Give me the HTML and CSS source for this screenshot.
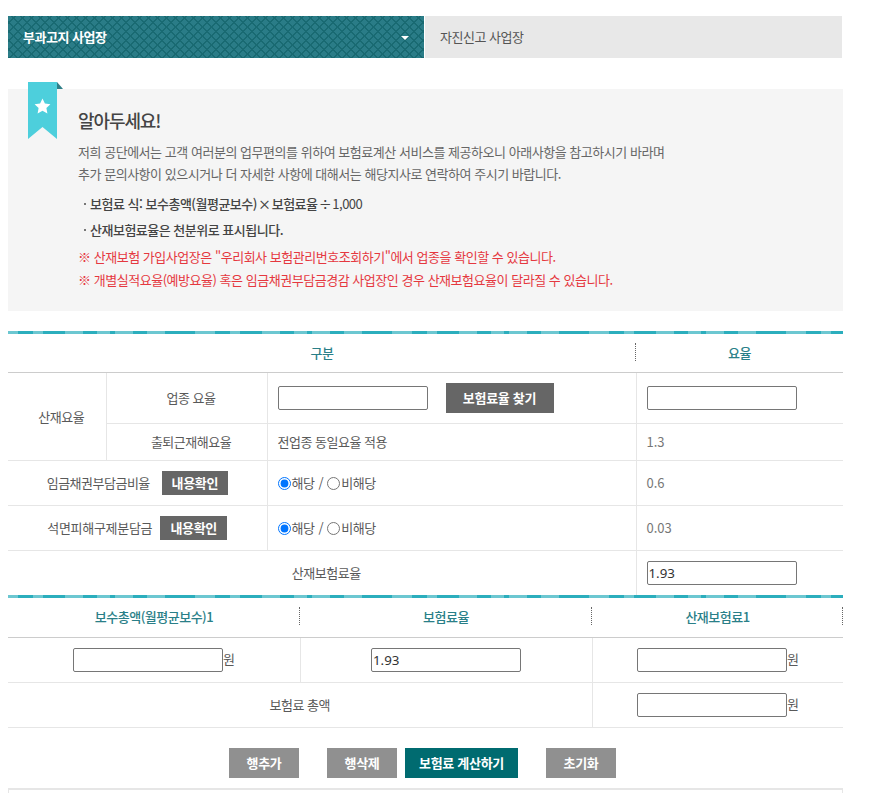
FILE: index.html
```html
<!DOCTYPE html>
<html lang="ko">
<head>
<meta charset="utf-8">
<title>보험료 계산</title>
<link rel="stylesheet" href="styles.css">
</head>
<body>
<div class="tabs">
  <a class="tab tab-on"><span>부과고지 사업장</span><i class="caret"></i></a>
  <a class="tab tab-off">자진신고 사업장</a>
</div>

<section class="notice">
  <div class="ribbon">
    <svg width="38" height="58" viewBox="0 0 38 58">
      <path d="M29 0l6 7h-6z" fill="#2f7f88"/>
      <path d="M0 0h29v57L14.500 45 0 57z" fill="#4dcfdc"/>
      <path d="M14.500 16.500l2.400 5 5.500.7-4 3.800 1 5.400-4.900-2.700-4.900 2.700 1-5.400-4-3.800 5.500-.7z" fill="#fff"/>
    </svg>
  </div>
  <h2 class="notice-title">알아두세요!</h2>
  <p class="notice-text">저희 공단에서는 고객 여러분의 업무편의를 위하여 보험료계산 서비스를 제공하오니 아래사항을 참고하시기 바라며<br>추가 문의사항이 있으시거나 더 자세한 사항에 대해서는 해당지사로 연락하여 주시기 바랍니다.</p>
  <ul class="notice-list">
    <li>보험료 식: 보수총액(월평균보수)<span class="sym-x"> × </span>보험료율<span class="sym-d"> ÷ </span><span class="digits">1,000</span></li>
    <li>산재보험료율은 천분위로 표시됩니다.</li>
  </ul>
  <p class="notice-warn">※ 산재보험 가입사업장은 "우리회사 보험관리번호조회하기"에서 업종을 확인할 수 있습니다.<br>※ 개별실적요율(예방요율) 혹은 임금채권부담금경감 사업장인 경우 산재보험요율이 달라질 수 있습니다.</p>
</section>

<div class="band"></div>
<table class="grid grid-a">
  <colgroup><col class="c1"><col class="c2"><col class="c3"><col class="c4"></colgroup>
  <thead>
    <tr class="h-row"><th colspan="3" class="dots">구분</th><th>요율</th></tr>
  </thead>
  <tbody>
    <tr class="r-51">
      <td rowspan="2" class="label nudge">산재요율</td>
      <td class="label nudge">업종 요율</td>
      <td class="left"><input class="field field-a" type="text"><button class="btn-find" type="button">보험료율 찾기</button></td>
      <td class="left"><input class="field" type="text"></td>
    </tr>
    <tr class="r-37">
      <td class="label nudge">출퇴근재해요율</td>
      <td class="left">전업종 동일요율 적용</td>
      <td class="left num">1.3</td>
    </tr>
    <tr class="r-45">
      <td colspan="2" class="label"><span class="cell-flex">임금채권부담금비율<button class="btn-check btn-check-a" type="button">내용확인</button></span></td>
      <td class="left choice"><label class="radio"><input type="radio" name="a" checked>해당</label> / <label class="radio"><input type="radio" name="a">비해당</label></td>
      <td class="left num">0.6</td>
    </tr>
    <tr class="r-45">
      <td colspan="2" class="label"><span class="cell-flex wide">석면피해구제분담금<button class="btn-check btn-check-b" type="button">내용확인</button></span></td>
      <td class="left choice"><label class="radio"><input type="radio" name="b" checked>해당</label> / <label class="radio"><input type="radio" name="b">비해당</label></td>
      <td class="left num">0.03</td>
    </tr>
    <tr class="r-45 last">
      <td colspan="3" class="label nudge">산재보험료율</td>
      <td class="left"><input class="field" type="text" value="1.93"></td>
    </tr>
  </tbody>
</table>
<div class="band"></div>
<table class="grid grid-b">
  <colgroup><col class="d1"><col class="d2"><col class="d3"></colgroup>
  <thead>
    <tr class="h-row2"><th class="dots">보수총액(월평균보수)1</th><th class="dots">보험료율</th><th class="dots">산재보험료1</th></tr>
  </thead>
  <tbody>
    <tr class="r-45">
      <td class="center"><input class="field" type="text">원</td>
      <td class="center"><input class="field" type="text" value="1.93"></td>
      <td class="center"><input class="field" type="text">원</td>
    </tr>
    <tr class="r-45">
      <td colspan="2" class="center">보험료 총액</td>
      <td class="center"><input class="field" type="text">원</td>
    </tr>
  </tbody>
</table>

<div class="actions">
  <button class="act act-grey" type="button">행추가</button>
  <button class="act act-grey act-del" type="button">행삭제</button>
  <button class="act act-main" type="button">보험료 계산하기</button>
  <button class="act act-grey act-reset" type="button">초기화</button>
</div>
<div class="result"></div>
</body>
</html>
```
FILE: styles.css
```css
* { box-sizing: border-box; }
html, body { height: 793px; overflow: hidden; }
body {
  margin: 0;
  padding: 16px 51px 0 8px;
  background: #fff;
  color: #595959;
  font-family: "Noto Sans CJK KR", "Noto Sans", sans-serif;
  font-size: 13px;
  letter-spacing: -0.5px;
}

.tabs { display: flex; width: 834px; height: 42px; }
.tab { display: flex; align-items: center; font-size: 13px; padding-bottom: 2px; }
.tab-on {
  width: 416px;
  margin-right: 1px;
  padding-left: 15px;
  padding-right: 15px;
  justify-content: space-between;
  color: #fff;
  font-weight: 700;
  background-color: #2a7c87;
  background-image:
    repeating-linear-gradient(45deg, #196a72 0 1.400px, transparent 1.400px 6.360px),
    repeating-linear-gradient(-45deg, #196a72 0 1.400px, transparent 1.400px 6.360px);
}
.tab-off { flex: 1; padding-left: 15px; background: #e8e8e8; color: #555; }
.caret {
  width: 0; height: 0;
  border-left: 4px solid transparent;
  border-right: 4px solid transparent;
  border-top: 4px solid #fff;
  margin-top: 3px;
}

.notice {
  position: relative;
  width: 835px;
  height: 222px;
  margin-top: 31px;
  padding: 19px 0 0 70px;
  background: #f5f5f5;
}
.ribbon { position: absolute; left: 20px; top: -7px; line-height: 0; }
.notice-title { margin: 0; font-size: 18px; font-weight: 500; line-height: 24px; letter-spacing: -1.100px; color: #444; }
.notice-text { margin: 9px 0 0; font-size: 13px; line-height: 21.500px; letter-spacing: -0.470px; color: #666; }
.notice-list { margin: 7px 0 0; padding: 0; list-style: none; font-size: 13px; color: #444; font-weight: 500; }
.notice-list li { position: relative; padding-left: 12px; line-height: 26px; }
.notice-list li::before {
  content: "";
  position: absolute;
  left: 6px; top: 12px;
  width: 2px; height: 2px;
  background: #777;
}
.sym-x { word-spacing: -2px; }
.sym-d { word-spacing: -2px; }
.digits { font-weight: 400; }
.notice-warn { margin: 3px 0 0; font-size: 13px; line-height: 22.500px; letter-spacing: -0.470px; color: #e5383f; }

.band {
  width: 835px;
  height: 3px;
  background-color: #6cc7d1;
  background-image: linear-gradient(90deg,
    transparent 0 10px, #2baebd 10px 25px, transparent 25px 35px, #2baebd 35px 57px,
    transparent 57px 75px, #2baebd 75px 89px, transparent 89px 102px, #2baebd 102px 107px,
    transparent 107px 125px, #2baebd 125px 139px, transparent 139px 157px, #2baebd 157px 187px,
    transparent 187px 197px);
  background-size: 197px 3px;
}
.notice + .band { margin-top: 20px; }

.grid { width: 835px; border-collapse: collapse; table-layout: fixed; }
.c1 { width: 98px; } .c2 { width: 161px; } .c3 { width: 369px; } .c4 { width: 207px; }
.d1 { width: 292px; } .d2 { width: 292px; } .d3 { width: 251px; }
.grid th {
  position: relative;
  font-weight: 500;
  font-size: 13px;
  color: #2a7f88;
  border-bottom: 1px solid #ccc;
  padding: 0 0 1px;
}
.grid td { border-bottom: 1px solid #e6e6e6; border-right: 1px solid #e6e6e6; padding: 0; }
.grid td:last-child { border-right: 0; }
.grid tr.last td { border-bottom: 0; }
.dots::after {
  content: "";
  position: absolute;
  right: 0; top: 9px;
  height: 18px;
  border-right: 1px dotted #666;
}
.h-row { height: 38px; }
.h-row2 { height: 39px; }
.r-51 { height: 51px; }
.r-37 { height: 37px; }
.r-45 { height: 45px; }
.label, .center { text-align: center; }
.nudge { padding-left: 9px !important; }
.left { text-align: left; padding-left: 10px !important; }
.num { color: #777; letter-spacing: 0; }
.choice { word-spacing: 1px; }
.cell-flex { display: inline-flex; align-items: center; }
.wide { letter-spacing: -0.300px; }

.field {
  width: 150px;
  height: 24px;
  padding: 0 1px;
  border: 1px solid #767676;
  border-radius: 2px;
  background: #fff;
  font: 13.333px "Noto Sans", sans-serif;
  color: #333;
  vertical-align: middle;
}
.field-a { margin-right: 18px; }
.btn-find {
  width: 108px;
  height: 30px;
  border: 0;
  padding: 0;
  background: #666;
  color: #fff;
  font: 700 13px "Noto Sans CJK KR", sans-serif;
  letter-spacing: -0.300px;
  vertical-align: middle;
}
.btn-check {
  height: 24px;
  border: 0;
  padding: 0;
  background: #666;
  color: #fff;
  font: 700 13px "Noto Sans CJK KR", sans-serif;
  letter-spacing: -0.300px;
}
.btn-check-a { width: 66px; margin-left: 12px; }
.btn-check-b { width: 67px; margin-left: 8px; }
.radio input { width: 13px; height: 13px; margin: 0 1px 0 0; vertical-align: -2px; }

.actions { display: flex; width: 835px; justify-content: flex-start; padding-left: 221px; margin-top: 20px; }
.act {
  height: 30px;
  width: 70px;
  border: 0;
  padding: 0;
  color: #fff;
  font: 700 13px "Noto Sans CJK KR", sans-serif;
  letter-spacing: -0.300px;
}
.act-grey { background: #909090; }
.act-del { margin-left: 28px; }
.act-main { width: 113px; margin-left: 8px; background: #006b70; }
.act-reset { margin-left: 28px; }
.result { width: 835px; height: 40px; margin-top: 10px; border: 1px solid #e6e6e6; border-top-width: 2px; }
```
